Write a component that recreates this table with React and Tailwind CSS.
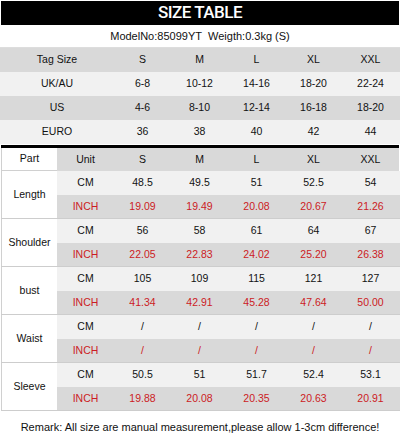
import React from 'react';

const sizes = ['S', 'M', 'L', 'XL', 'XXL'];

const tagRows = [
  { label: 'UK/AU', values: ['6-8', '10-12', '14-16', '18-20', '22-24'], bg: 'bg-[#f1f1f1]' },
  { label: 'US', values: ['4-6', '8-10', '12-14', '16-18', '18-20'], bg: 'bg-[#d9d9d9]' },
  { label: 'EURO', values: ['36', '38', '40', '42', '44'], bg: 'bg-[#f1f1f1]' },
];

const parts = [
  { name: 'Length', cm: ['48.5', '49.5', '51', '52.5', '54'], inch: ['19.09', '19.49', '20.08', '20.67', '21.26'] },
  { name: 'Shoulder', cm: ['56', '58', '61', '64', '67'], inch: ['22.05', '22.83', '24.02', '25.20', '26.38'] },
  { name: 'bust', cm: ['105', '109', '115', '121', '127'], inch: ['41.34', '42.91', '45.28', '47.64', '50.00'] },
  { name: 'Waist', cm: ['/', '/', '/', '/', '/'], inch: ['/', '/', '/', '/', '/'] },
  { name: 'Sleeve', cm: ['50.5', '51', '51.7', '52.4', '53.1'], inch: ['19.88', '20.08', '20.35', '20.63', '20.91'] },
];

const App = () => {
  return (
    <div className="w-[400px] h-[433px] bg-white overflow-hidden font-['Liberation_Sans',Arial,sans-serif] text-[#111]">
      <div className="pt-px px-px">
        <div className="h-6 bg-black flex items-center justify-center text-white font-['Roboto',sans-serif] font-medium text-[17px] tracking-[-0.5px]">
          SIZE TABLE
        </div>
      </div>

      <div className="h-[23px] flex items-center justify-center text-[11px] border-b border-[#dddddd]">
        ModelNo:85099YT&nbsp; Weigth:0.3kg (S)
      </div>

      {/* tag size table */}
      <div className="text-[10.5px]">
        <div className="grid grid-cols-[114px_repeat(5,57px)] h-6 bg-[#d9d9d9]">
          <div className="flex items-center justify-center">Tag Size</div>
          {sizes.map(s => (
            <div key={s} className="flex items-center justify-center">{s}</div>
          ))}
        </div>
        {tagRows.map(row => (
          <div key={row.label} className={`grid grid-cols-[114px_repeat(5,57px)] h-6 ${row.bg}`}>
            <div className="flex items-center justify-center">{row.label}</div>
            {row.values.map((v, i) => (
              <div key={i} className="flex items-center justify-center">{v}</div>
            ))}
          </div>
        ))}
      </div>

      <div className="mt-px mx-px h-[3px] bg-black" />

      {/* measurement table */}
      <div className="text-[10.5px] ml-px">
        <div className="grid grid-cols-[56px_57px_repeat(5,57px)] h-[23px]">
          <div className="flex items-center justify-center bg-white border-l border-b border-[#d0d0d0]">Part</div>
          <div className="flex items-center justify-center bg-[#d9d9d9]">Unit</div>
          {sizes.map(s => (
            <div key={s} className="flex items-center justify-center bg-[#d9d9d9]">{s}</div>
          ))}
        </div>

        {parts.map(part => (
          <div key={part.name} className="flex border-b border-[#cdcdcd]">
            <div className="w-[56px] flex items-center justify-center bg-white border-l border-[#d0d0d0]">
              {part.name}
            </div>
            <div className="flex-1">
              <div className="grid grid-cols-[57px_repeat(5,57px)] h-6 bg-[#f1f1f1]">
                <div className="flex items-center justify-center">CM</div>
                {part.cm.map((v, i) => (
                  <div key={i} className="flex items-center justify-center">{v}</div>
                ))}
              </div>
              <div className="grid grid-cols-[57px_repeat(5,57px)] h-[23px] bg-[#d9d9d9] text-[#cc1b24]">
                <div className="flex items-center justify-center">INCH</div>
                {part.inch.map((v, i) => (
                  <div key={i} className="flex items-center justify-center">{v}</div>
                ))}
              </div>
            </div>
          </div>
        ))}
      </div>

      <div className="pt-[8px] text-center text-[11px] text-[#111]">
        Remark: All size are manual measurement,please allow 1-3cm difference!
      </div>
    </div>
  );
};

export default App;
